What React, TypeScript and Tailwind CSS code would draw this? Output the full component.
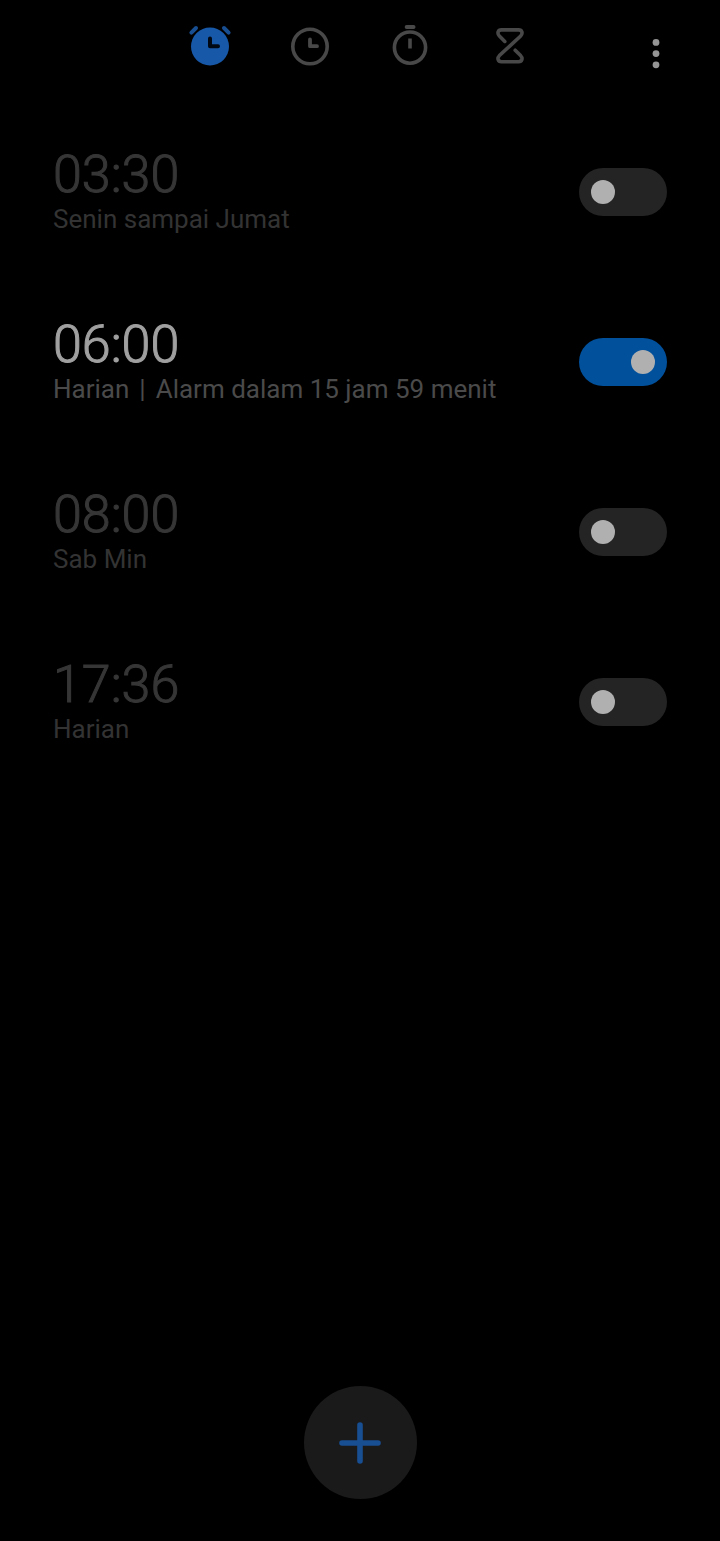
import { useState } from 'react';

type Alarm = { id: string; time: string; notes: string[]; on: boolean };

const initialAlarms: Alarm[] = [
  { id: 'a1', time: '03:30', notes: ['Senin sampai Jumat'], on: false },
  { id: 'a2', time: '06:00', notes: ['Harian', 'Alarm dalam 15 jam 59 menit'], on: true },
  { id: 'a3', time: '08:00', notes: ['Sab Min'], on: false },
  { id: 'a4', time: '17:36', notes: ['Harian'], on: false },
];

function AlarmIcon() {
  return (
    <svg viewBox="0 0 48 48" className="size-12" fill="none" strokeLinecap="round" strokeLinejoin="round" aria-hidden="true">
      <circle cx="24" cy="24.5" r="19" fill="#1858a8" />
      <path d="M5.4 10.6 10 6M42.6 10.6 38 6" stroke="#184e92" strokeWidth="4" />
      <path d="M24 16.5v7.7h8" stroke="#000814" strokeWidth="4" />
    </svg>
  );
}

function ClockIcon() {
  return (
    <svg viewBox="0 0 48 48" className="size-12" fill="none" stroke="#484848" aria-hidden="true">
      <circle cx="24" cy="24.5" r="17.2" strokeWidth="3.6" />
      <path d="M24 17.5v6.7h7" strokeWidth="3.8" strokeLinecap="round" strokeLinejoin="round" />
    </svg>
  );
}

function StopwatchIcon() {
  return (
    <svg viewBox="0 0 48 48" className="size-12" fill="none" stroke="#484848" strokeWidth="3.6" aria-hidden="true">
      <circle cx="24" cy="25.6" r="15.6" />
      <path d="M20.6 5h7" strokeLinecap="round" strokeWidth="3.8" />
      <path d="M24 16.5v10" />
    </svg>
  );
}

function HourglassIcon() {
  return (
    <svg viewBox="0 0 48 48" className="size-12" fill="none" stroke="#484848" strokeWidth="3.6" strokeLinecap="round" strokeLinejoin="round" aria-hidden="true">
      <path d="M18.8 19.4 13.4 14C10.8 11.2 12 7.9 15.4 7.9H32.6C36 7.9 37.2 11.2 34.6 14C31.6 17 16.4 30.6 13.4 33.6C10.8 36.4 12 39.7 15.4 39.7H32.6C36 39.7 37.2 36.4 34.6 33.6L29.2 28.2" />
    </svg>
  );
}

const tabs = [
  { label: 'Alarm', Icon: AlarmIcon },
  { label: 'Jam', Icon: ClockIcon },
  { label: 'Stopwatch', Icon: StopwatchIcon },
  { label: 'Timer', Icon: HourglassIcon },
];

export default function App() {
  const [alarms, setAlarms] = useState(initialAlarms);

  const toggle = (id: string) =>
    setAlarms((list) => list.map((a) => (a.id === id ? { ...a, on: !a.on } : a)));

  return (
    <div className="flex min-h-screen flex-col bg-black font-['Roboto','Noto_Sans',sans-serif]">
      <header className="grid grid-cols-[1fr_auto_1fr] items-start px-10 pt-[22px]">
        <nav className="col-start-2 flex gap-[52px]">
          {tabs.map(({ label, Icon }) => (
            <button key={label} type="button" aria-label={label} className="size-12">
              <Icon />
            </button>
          ))}
        </nav>
        <button type="button" aria-label="Menu" className="mt-2 size-12 justify-self-end">
          <svg viewBox="0 0 48 48" className="size-12" fill="#959595" aria-hidden="true">
            <circle cx="24" cy="12.4" r="3.4" />
            <circle cx="24" cy="23.6" r="3.4" />
            <circle cx="24" cy="34.8" r="3.4" />
          </svg>
        </button>
      </header>

      <ul className="mt-[29px]">
        {alarms.map((alarm) => (
          <li key={alarm.id}>
            <label htmlFor={alarm.id} className="flex h-[170px] items-center justify-between px-[53px]">
              <span className={`pb-0.5 ${alarm.on ? 'text-[#a0a0a0]' : 'text-[#363636]'}`}>
                <span className="block text-[52px] leading-[56px] font-light [-webkit-text-stroke:1px_currentColor]">
                  {alarm.time}
                </span>
                <span
                  className={`flex text-[26px] leading-8 ${alarm.on ? 'text-[#4a4a4a]' : 'text-[#333333]'}`}
                >
                  {alarm.notes.map((note, i) => (
                    <span key={note}>
                      {i > 0 && <span className="mx-2.5">|</span>}
                      {note}
                    </span>
                  ))}
                </span>
              </span>
              <input
                id={alarm.id}
                type="checkbox"
                role="switch"
                checked={alarm.on}
                onChange={() => toggle(alarm.id)}
                className="flex h-12 w-[88px] shrink-0 appearance-none items-center rounded-full bg-[#242424] px-3 before:block before:size-6 before:rounded-full before:bg-[#b0b0b0] before:content-[''] checked:justify-end checked:bg-[#00509c]"
              />
            </label>
          </li>
        ))}
      </ul>

      <footer className="mt-auto flex justify-center pb-[42px]">
        <button
          type="button"
          aria-label="Tambah alarm"
          className="flex size-[113px] items-center justify-center rounded-full bg-[#1a1a1a]"
        >
          <svg viewBox="0 0 48 48" className="size-12" fill="none" stroke="#184e92" strokeWidth="5.6" strokeLinecap="round" aria-hidden="true">
            <path d="M24 6v36M6 24h36" />
          </svg>
        </button>
      </footer>
    </div>
  );
}
